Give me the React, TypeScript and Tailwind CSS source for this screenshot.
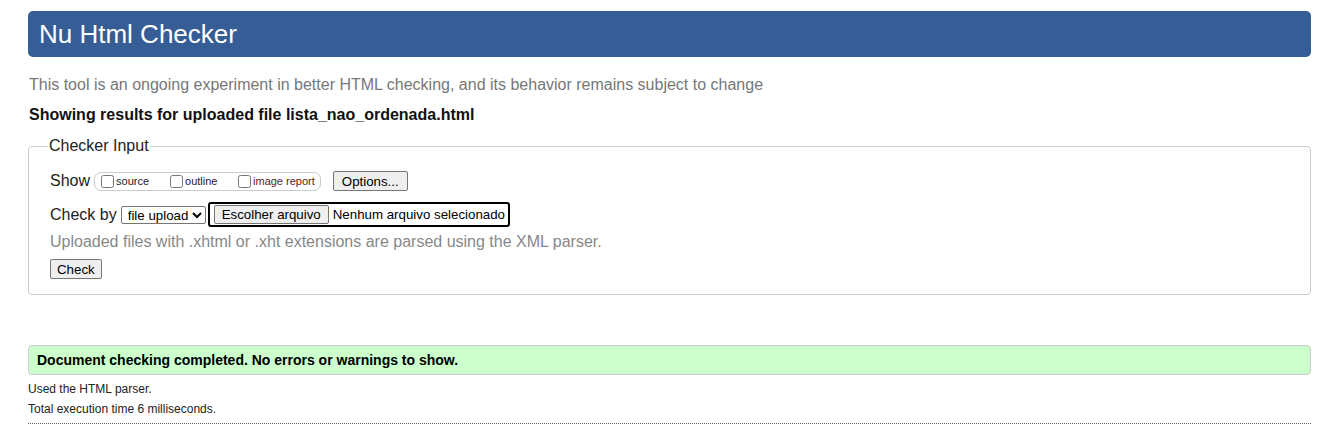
export default function App() {
  return (
    <div className="h-[429px] overflow-hidden bg-white pl-[28px] pr-[11px] pt-[11px] text-[16px] text-[#222]" style={{ fontFamily: '"Liberation Sans", Arial, sans-serif' }}>
      <h1 className="flex h-[46px] items-center rounded-[5px] bg-[#365d95] pl-[11px] text-[26px] font-normal text-white">Nu Html Checker</h1>

      <p className="mt-[16px] pl-[1px] text-[16px] text-[#777]">This tool is an ongoing experiment in better HTML checking, and its behavior remains subject to change</p>
      <p className="mt-[6px] pl-[1px] text-[16px] font-bold text-[#111]">Showing results for uploaded file lista_nao_ordenada.html</p>

      <fieldset className="mt-[7px] rounded-[4px] border border-[#ccc] px-[21px] pb-[13px] pt-[11px]">
        <legend className="ml-[-2px] px-[1px] text-[16px] text-[#222]">Checker Input</legend>

        <div className="flex items-center">
          <span className="mr-[4px] text-[16px]">Show</span>
          <span className="flex h-[19px] items-center rounded-[7px] border border-[#ccc] pl-[6px] pr-[5px] text-[11px]">
            <label className="flex w-[69px] items-center">
              <input type="checkbox" className="m-0 h-[13px] w-[13px]" />
              <span className="ml-[2px]">source</span>
            </label>
            <label className="flex w-[68px] items-center">
              <input type="checkbox" className="m-0 h-[13px] w-[13px]" />
              <span className="ml-[2px]">outline</span>
            </label>
            <label className="flex items-center">
              <input type="checkbox" className="m-0 h-[13px] w-[13px]" />
              <span className="ml-[2px] text-[#5a1a2a]">image report</span>
            </label>
          </span>
          <button className="ml-[12px] h-[20px] rounded-[2px] border border-[#767676] bg-[#efefef] px-[8px] text-[13.3px] text-black">Options...</button>
        </div>

        <div className="mt-[9px] flex items-center">
          <span className="mr-[4px] text-[16px]">Check by</span>
          <select className="h-[18px] rounded-[2px] border border-[#767676] bg-white pl-[2px] text-[13.3px] text-black" defaultValue="file">
            <option value="file">file upload</option>
            <option value="address">address</option>
            <option value="text">text input</option>
          </select>
          <span className="ml-[2px] flex h-[25px] items-center rounded-[3px] border-2 border-black pl-[4px] pr-[3px] text-[13.3px] text-black">
            <span className="flex h-[19px] items-center rounded-[2px] border border-[#767676] bg-[#efefef] px-[7px]">Escolher arquivo</span>
            <span className="ml-[4px]">Nenhum arquivo selecionado</span>
          </span>
        </div>

        <p className="mt-[3px] text-[16px] text-[#888]">Uploaded files with .xhtml or .xht extensions are parsed using the XML parser.</p>

        <button className="mt-[5px] h-[20px] rounded-[2px] border border-[#767676] bg-[#efefef] px-[6px] text-[13.3px] text-black">Check</button>
      </fieldset>

      <div className="mt-[50px] flex h-[30px] items-center rounded-[4px] border border-[#ccc] bg-[#ccffcc] pl-[8px] text-[14px] font-bold text-black">Document checking completed. No errors or warnings to show.</div>

      <p className="mt-[4px] text-[12px] leading-[20px] text-[#222]">Used the HTML parser.</p>
      <p className="text-[12px] leading-[20px] text-[#222]">Total execution time 6 milliseconds.</p>
      <div className="mt-[4px] border-t border-dotted border-[#666]"></div>
    </div>
  );
}
